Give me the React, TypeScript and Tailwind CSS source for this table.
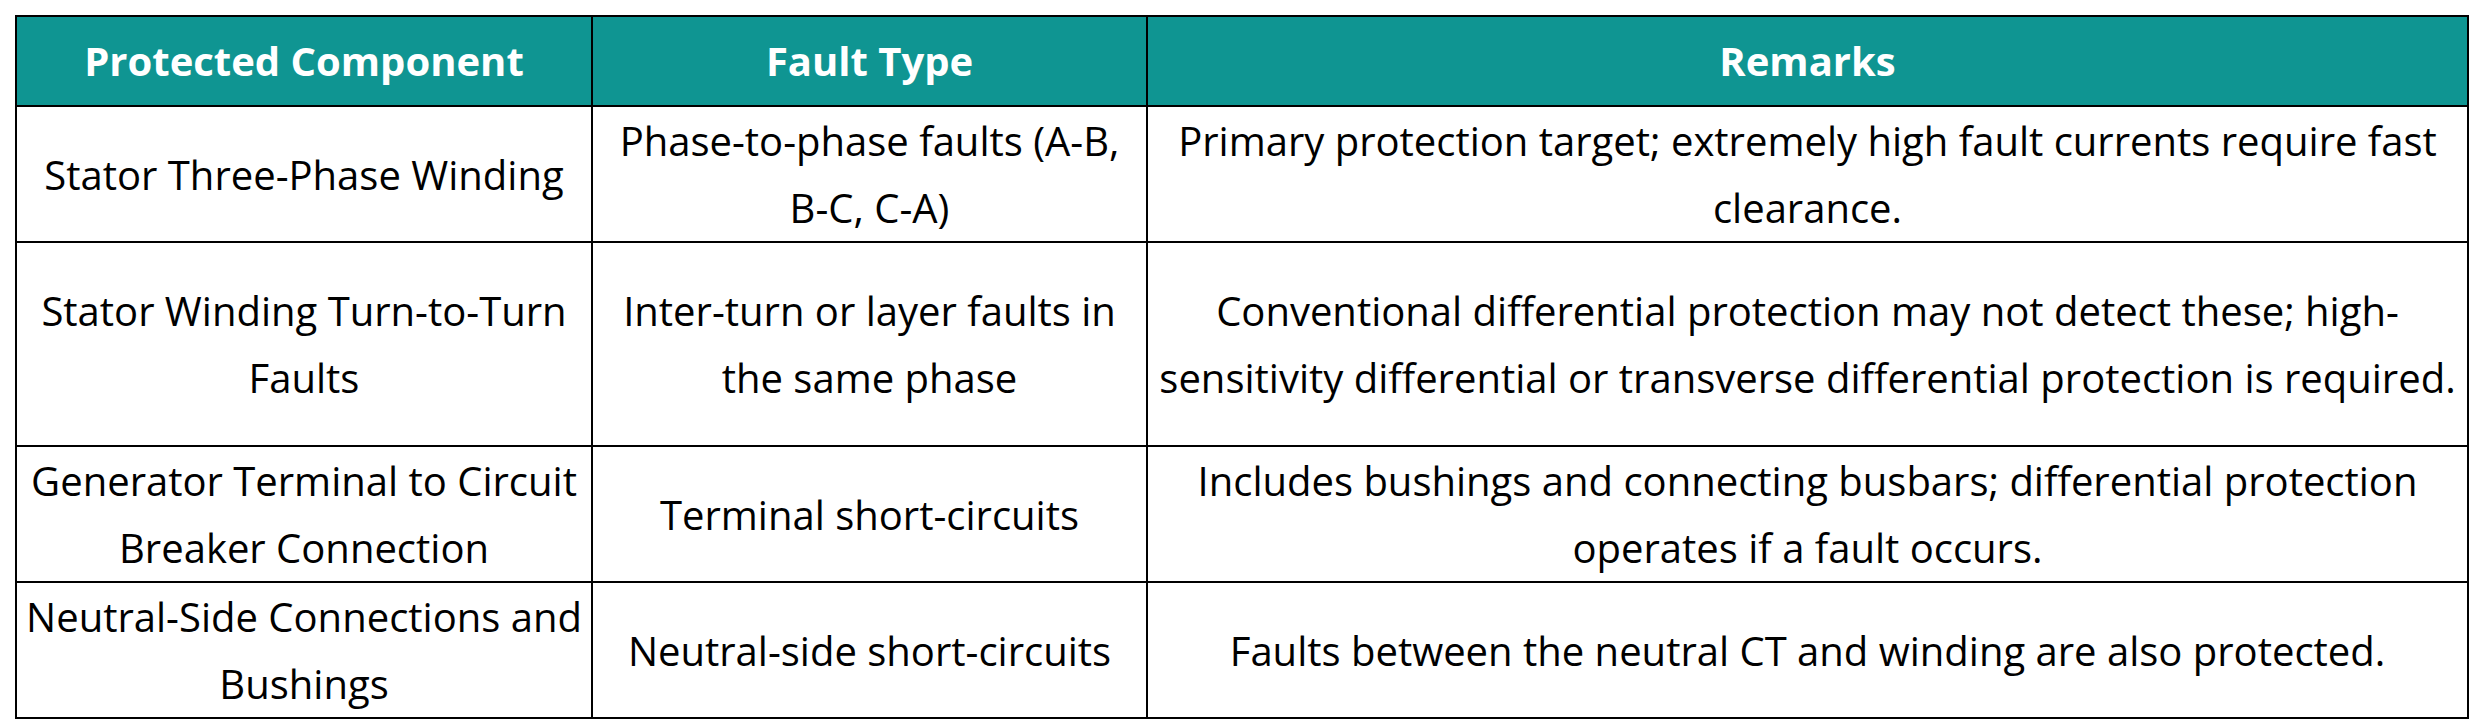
import React from "react";

const rows: { c1: string[]; c2: string[]; c3: string[]; h: string }[] = [
  {
    c1: ["Stator Three-Phase Winding"],
    c2: ["Phase-to-phase faults (A-B,", "B-C, C-A)"],
    c3: ["Primary protection target; extremely high fault currents require fast", "clearance."],
    h: "h-[136px]",
  },
  {
    c1: ["Stator Winding Turn-to-Turn", "Faults"],
    c2: ["Inter-turn or layer faults in", "the same phase"],
    c3: [
      "Conventional differential protection may not detect these; high-",
      "sensitivity differential or transverse differential protection is required.",
    ],
    h: "h-[204px]",
  },
  {
    c1: ["Generator Terminal to Circuit", "Breaker Connection"],
    c2: ["Terminal short-circuits"],
    c3: ["Includes bushings and connecting busbars; differential protection", "operates if a fault occurs."],
    h: "h-[136px]",
  },
  {
    c1: ["Neutral-Side Connections and", "Bushings"],
    c2: ["Neutral-side short-circuits"],
    c3: ["Faults between the neutral CT and winding are also protected."],
    h: "h-[130px]",
  },
];

function Lines({ lines }: { lines: string[] }) {
  return (
    <>
      {lines.map((l, i) => (
        <div key={i} className="whitespace-nowrap">
          {l}
        </div>
      ))}
    </>
  );
}

export default function App() {
  return (
    <div className="w-[2482px] h-[728px] bg-white pt-[15px] pl-[15px] font-['Open_Sans',sans-serif] text-black">
      <table className="table-fixed border-collapse w-[2452px] border-2 border-black">
        <colgroup>
          <col className="w-[576px]" />
          <col className="w-[555px]" />
          <col className="w-[1321px]" />
        </colgroup>
        <thead>
          <tr className="h-[90px] bg-[#0f9592] text-white font-bold text-[40px] leading-[50px]">
            <th className="border-2 border-black text-center align-middle">Protected Component</th>
            <th className="border-2 border-black text-center align-middle">Fault Type</th>
            <th className="border-2 border-black text-center align-middle">Remarks</th>
          </tr>
        </thead>
        <tbody className="text-[40px] leading-[67px]">
          {rows.map((r, i) => (
            <tr key={i} className={r.h}>
              <td className="border-2 border-black text-center align-middle p-0">
                <Lines lines={r.c1} />
              </td>
              <td className="border-2 border-black text-center align-middle p-0">
                <Lines lines={r.c2} />
              </td>
              <td className="border-2 border-black text-center align-middle p-0">
                <Lines lines={r.c3} />
              </td>
            </tr>
          ))}
        </tbody>
      </table>
    </div>
  );
}
